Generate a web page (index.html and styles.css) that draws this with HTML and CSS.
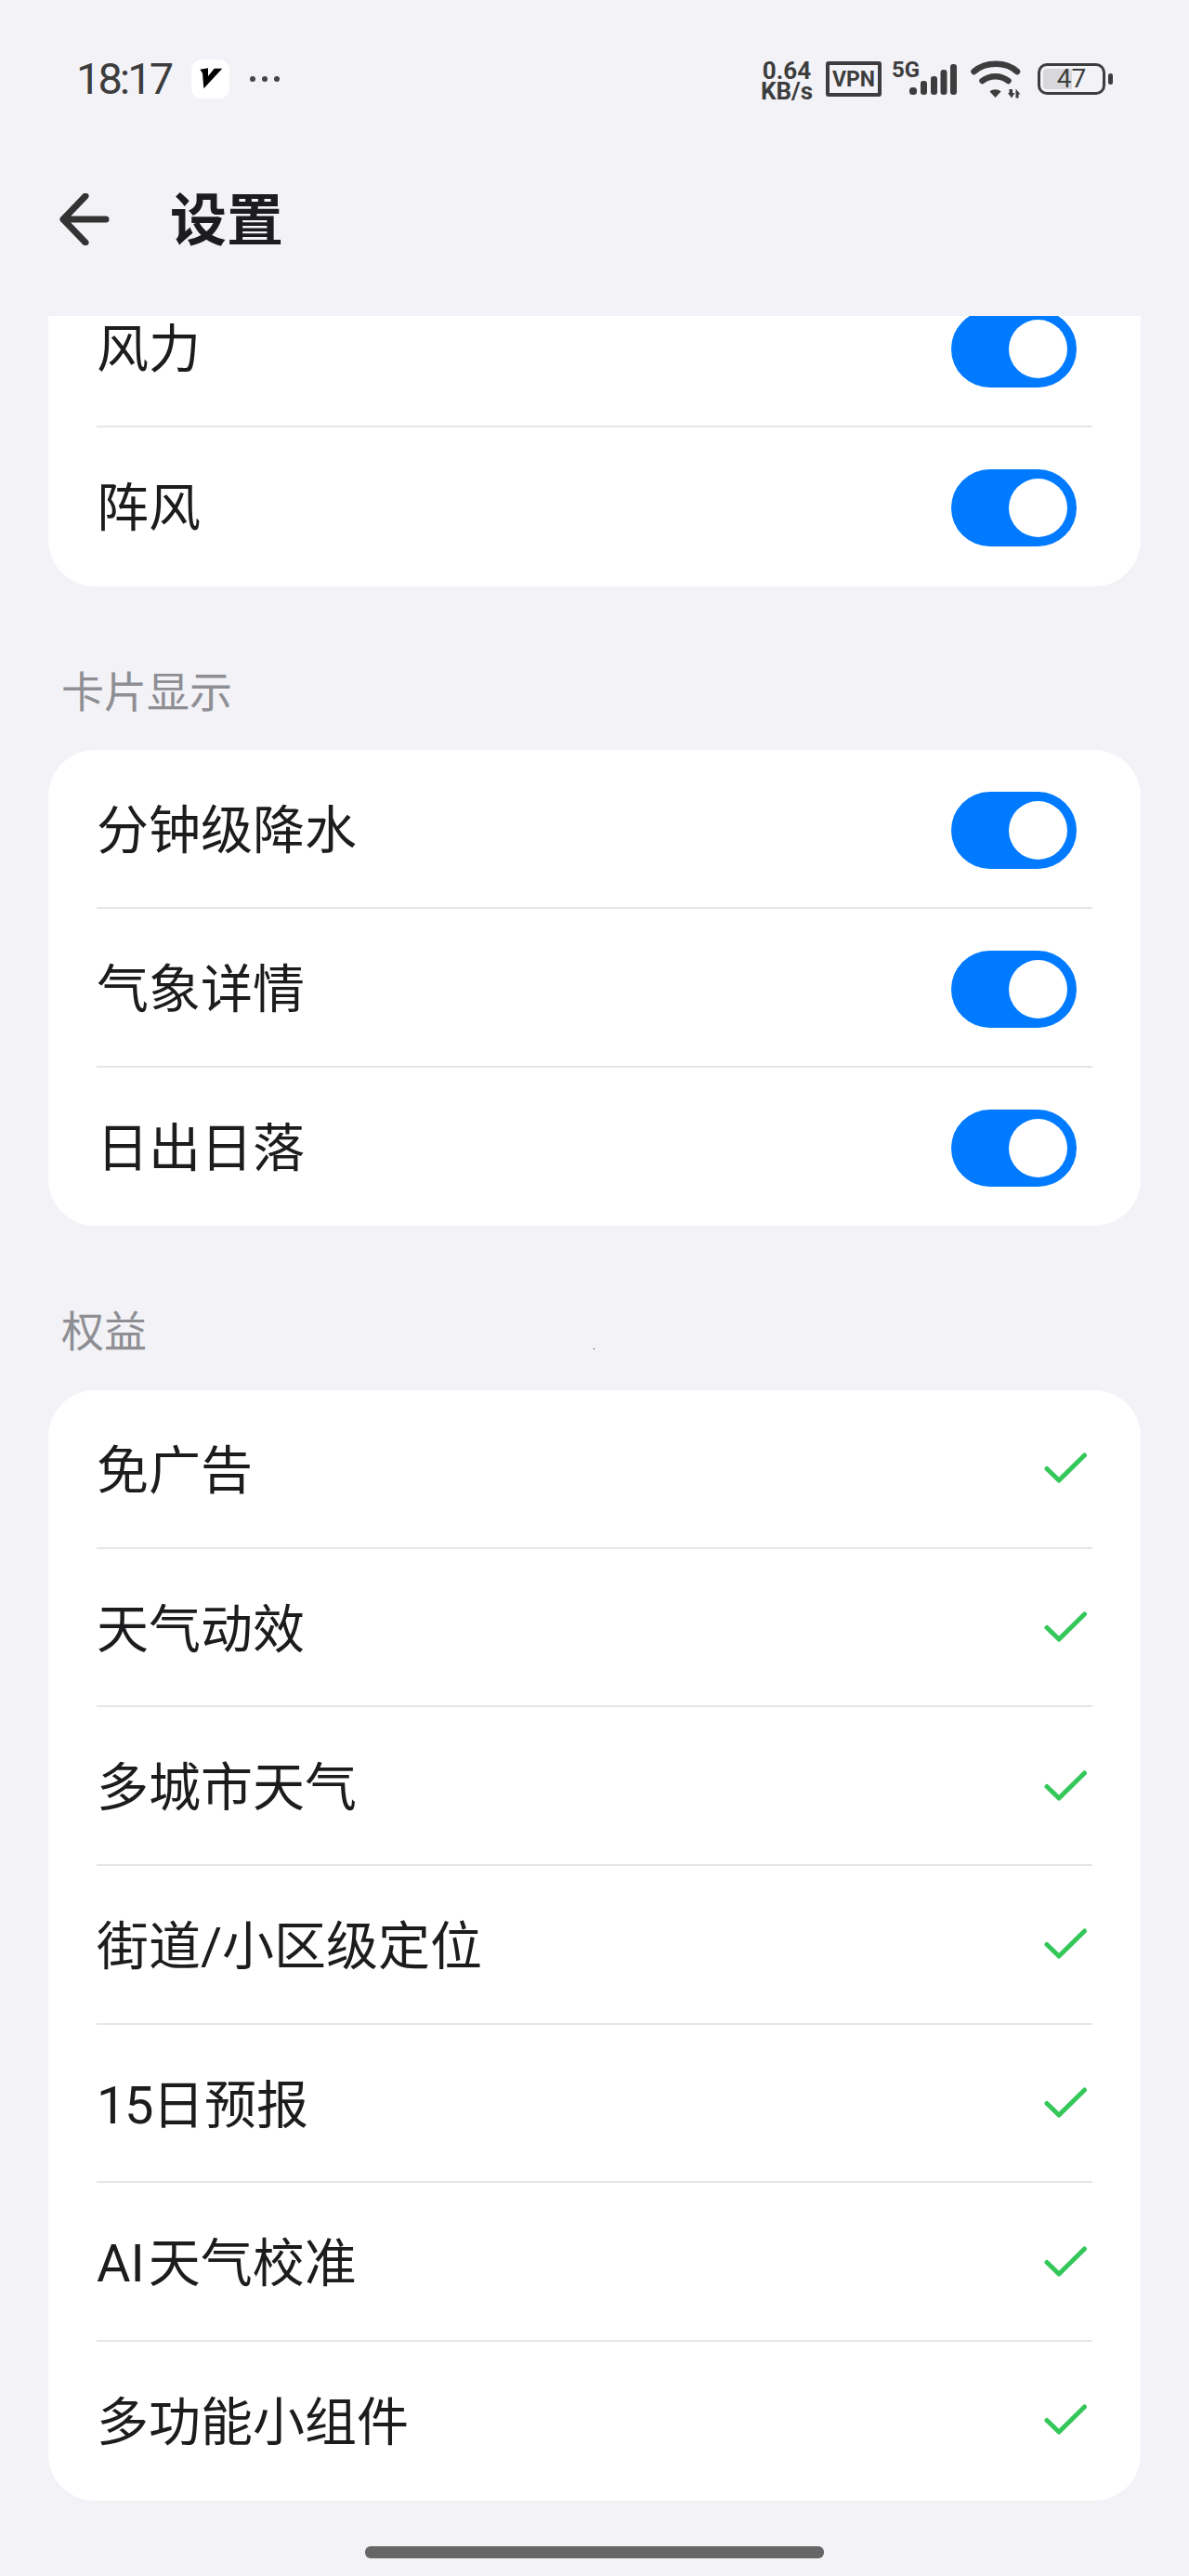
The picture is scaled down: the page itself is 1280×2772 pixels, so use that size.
FILE: index.html
```html
<!DOCTYPE html>
<html lang="zh-CN">
<head>
<meta charset="utf-8">
<title>设置</title>
<link rel="stylesheet" href="styles.css">
</head>
<body>
<div class="phone">
  <header class="status">
    <div class="status-left">
      <span class="time">18:17</span>
      <span class="app-badge"><svg width="41" height="42" viewBox="0 0 41 42"><path d="M9.3 10.7 18 9.3V18l6.700-8.300h8.600l-20 21.600L12 14.700z" fill="#000"/></svg></span>
      <svg class="dots" width="34" height="8" viewBox="0 0 34 8"><circle cx="4" cy="4" r="3" fill="#444"/><circle cx="17" cy="4" r="3" fill="#444"/><circle cx="30" cy="4" r="3" fill="#444"/></svg>
    </div>
    <div class="status-right">
      <div class="speed">0.64<br>KB/s</div>
      <div class="vpn">VPN</div>
      <div class="cell">
        <span class="five-g">5G</span>
        <svg width="51" height="33" viewBox="0 0 51 33"><g fill="#3d3d3d"><rect x="0" y="25" width="8" height="8" rx="3.500"/><rect x="12" y="18" width="7" height="15" rx="3"/><rect x="23" y="13" width="7" height="20" rx="3"/><rect x="33.500" y="6" width="7" height="27" rx="3"/><rect x="44" y="0" width="7" height="33" rx="3"/></g></svg>
      </div>
      <svg class="wifi" width="56" height="44" viewBox="0 0 56 44"><g fill="none" stroke="#3d3d3d" stroke-width="6.500" stroke-linecap="round"><path d="M3.500 15C16 4 38 4 50 15"/><path d="M12.500 25c8-6.500 20-6.500 28 0"/></g><path d="M20.500 36.500c3-3 9-3 12 0l-6 6.500z" fill="#3d3d3d"/><path d="M41.500 34h3.500v4h2.500l-3.500 5.500-4-5.500h1.500zM48.500 43.500V33.500l5 6h-2v4z" fill="#3d3d3d"/></svg>
      <div class="battery-wrap">
        <div class="battery"><span class="battery-fill"></span><span class="battery-num">47</span></div>
        <span class="battery-nub"></span>
      </div>
    </div>
  </header>

  <div class="appbar">
    <svg class="back" width="54" height="56" viewBox="0 0 54 56"><path d="M28 3 4 28l24 25M4 28h46" fill="none" stroke="#333" stroke-width="7" stroke-linecap="round" stroke-linejoin="round"/></svg>
    <h1 class="title">设置</h1>
  </div>

  <main class="scroll">
    <section class="card card-clipped">
      <div class="row"><span class="label">风力</span><span class="toggle"><i class="knob"></i></span></div>
      <div class="row"><span class="label">阵风</span><span class="toggle"><i class="knob"></i></span></div>
    </section>

    <h2 class="section">卡片显示</h2>
    <section class="card">
      <div class="row"><span class="label">分钟级降水</span><span class="toggle"><i class="knob"></i></span></div>
      <div class="row"><span class="label">气象详情</span><span class="toggle"><i class="knob"></i></span></div>
      <div class="row"><span class="label">日出日落</span><span class="toggle"><i class="knob"></i></span></div>
    </section>

    <h2 class="section">权益</h2>
    <section class="card">
      <div class="row"><span class="label">免广告</span><svg class="check" width="48" height="36" viewBox="0 0 48 36"><path d="M4 19.500 17 32 44.500 5"/></svg></div>
      <div class="row"><span class="label">天气动效</span><svg class="check" width="48" height="36" viewBox="0 0 48 36"><path d="M4 19.500 17 32 44.500 5"/></svg></div>
      <div class="row"><span class="label">多城市天气</span><svg class="check" width="48" height="36" viewBox="0 0 48 36"><path d="M4 19.500 17 32 44.500 5"/></svg></div>
      <div class="row"><span class="label">街道/小区级定位</span><svg class="check" width="48" height="36" viewBox="0 0 48 36"><path d="M4 19.500 17 32 44.500 5"/></svg></div>
      <div class="row"><span class="label"><span class="digits">15</span>日预报</span><svg class="check" width="48" height="36" viewBox="0 0 48 36"><path d="M4 19.500 17 32 44.500 5"/></svg></div>
      <div class="row"><span class="label"><span class="latin">AI</span>天气校准</span><svg class="check" width="48" height="36" viewBox="0 0 48 36"><path d="M4 19.500 17 32 44.500 5"/></svg></div>
      <div class="row"><span class="label">多功能小组件</span><svg class="check" width="48" height="36" viewBox="0 0 48 36"><path d="M4 19.500 17 32 44.500 5"/></svg></div>
    </section>
  </main>

  <div class="speck"></div>
  <div class="home"></div>
</div>
</body>
</html>
```
FILE: styles.css
```css
* { box-sizing: border-box; }
html, body { margin: 0; padding: 0; }
body {
  background: #f2f2f7;
  font-family: "Roboto", "Noto Sans CJK SC", sans-serif;
  color: #1c1c1e;
}
.phone {
  position: relative;
  width: 1280px;
  height: 2772px;
  display: flex;
  flex-direction: column;
  overflow: hidden;
}

/* status bar */
.status {
  height: 170px;
  flex: none;
  display: flex;
  justify-content: space-between;
  align-items: flex-start;
  padding: 60px 82px 0 82px;
}
.status-left { display: flex; align-items: center; height: 50px; }
.time { font-size: 47px; line-height: 48px; letter-spacing: -3px; color: #3d3d3d; width: 124px; }
.app-badge {
  width: 41px; height: 42px;
  background: #fff;
  border-radius: 11px;
  display: flex;
}
.dots { margin-left: 21px; }
.status-right { display: flex; align-items: center; height: 50px; }
.speed {
  font-size: 26px; line-height: 22px; font-weight: 700; color: #3d3d3d;
  text-align: center;
  width: 56px;
  margin-top: 3px;
}
.vpn {
  width: 60px; height: 38px;
  margin-left: 14px;
  border: 4px solid #3d3d3d;
  border-radius: 3px;
  font-size: 23px; font-weight: 700; color: #3d3d3d;
  display: flex; align-items: center; justify-content: center;
}
.cell {
  position: relative;
  width: 70px; height: 38px;
  margin-left: 11px;
  padding-bottom: 2px;
  display: flex; justify-content: flex-end; align-items: flex-end;
}
.five-g { position: absolute; left: 0; top: -3px; font-size: 24px; line-height: 24px; font-weight: 700; color: #3d3d3d; }
.wifi { margin: -2px 0 0 15px; }
.battery-wrap { display: flex; align-items: center; gap: 3px; margin-left: 16px; }
.battery {
  position: relative;
  width: 73px; height: 34px;
  border: 3.5px solid #3d3d3d;
  border-radius: 10px;
  display: flex; align-items: center; justify-content: center;
}
.battery-fill { position: absolute; left: 3px; top: 3px; bottom: 3px; width: 31px; background: #d8d8dc; border-radius: 4px 0 0 4px; }
.battery-num { position: relative; font-size: 28px; line-height: 28px; color: #3d3d3d; }
.battery-nub { width: 5px; height: 12px; background: #3d3d3d; border-radius: 3px; }

/* app bar */
.appbar {
  height: 170px;
  flex: none;
  display: flex;
  align-items: flex-start;
  padding: 38px 0 0 64px;
}
.back { flex: none; }
.title {
  margin: -4px 0 0 65px;
  font-family: "Noto Sans CJK SC", sans-serif;
  font-size: 61px; line-height: 58px; font-weight: 700;
  color: #1c1c1e;
}

/* scrolling content */
.scroll {
  flex: 1;
  min-height: 0;
  overflow: hidden;
  padding: 0 52px;
}
.card {
  background: #fff;
  border-radius: 50px;
  padding: 0 52px;
}
.card-clipped { margin-top: -50.6px; }
.row {
  height: 170.67px;
  display: flex;
  align-items: center;
  justify-content: space-between;
  font-size: 56px;
  color: #1c1c1e;
  border-bottom: 2px solid #e6e6ea;
}
.row:last-child { border-bottom-color: transparent; }
.label { padding-bottom: 6px; }
.latin { margin-right: 4px; }
.digits { letter-spacing: -1.5px; }
.section {
  margin: 0;
  height: 176.7px;
  padding: 80px 0 0 14px;
  font-size: 46px;
  line-height: 60px;
  font-weight: 400;
  color: #8e8e93;
  font-family: "Noto Sans CJK SC", sans-serif;
}
.toggle {
  width: 135px; height: 83px;
  border-radius: 42px;
  background: #007aff;
  margin: 4px 17px 0 0;
  display: flex;
  align-items: center;
  justify-content: flex-end;
  padding-right: 10px;
}
.knob { width: 63px; height: 63px; border-radius: 50%; background: #fff; }
.check { margin: 0 5px 2px 0; fill: none; stroke: #34c759; stroke-width: 5; stroke-linecap: round; stroke-linejoin: round; }

/* overlays */
.speck { position: absolute; left: 639px; top: 1451px; width: 1px; height: 1px; background: #000; }
.home {
  position: absolute;
  left: 393px; top: 2740px;
  width: 494px; height: 13px;
  border-radius: 6px;
  background: #666;
}
```
